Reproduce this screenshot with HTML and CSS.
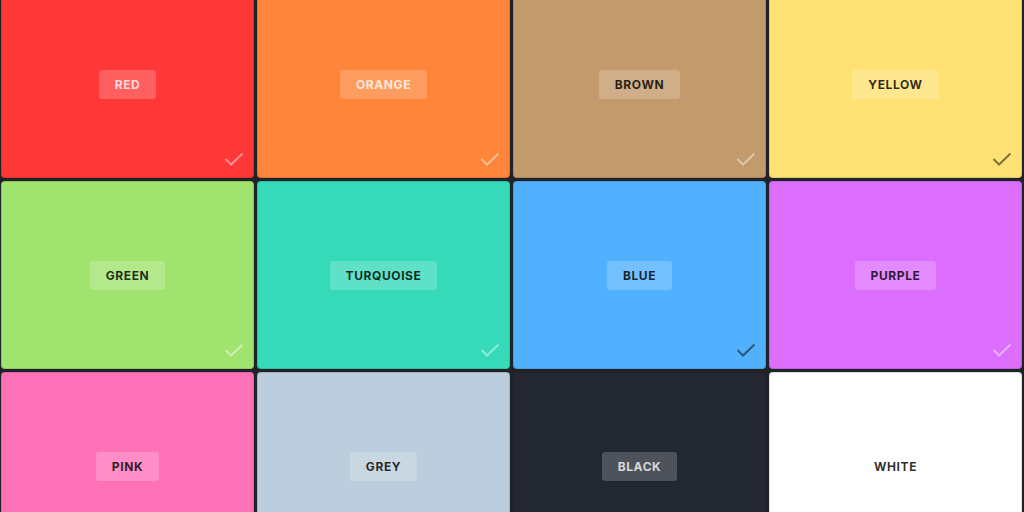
FILE: index.html
```html
<!DOCTYPE html>
<html lang="en">
<head>
  <meta charset="utf-8">
  <title>Colours</title>
  <link rel="stylesheet" href="styles.css">
</head>
<body>
  <div class="grid">
    <div class="tile red light">
      <span class="label">RED</span>
      <svg class="check" viewBox="0 0 20 14"><polyline points="1.5 7 7 12.5 18.5 1.5"/></svg>
    </div>
    <div class="tile orange light">
      <span class="label">ORANGE</span>
      <svg class="check" viewBox="0 0 20 14"><polyline points="1.5 7 7 12.5 18.5 1.5"/></svg>
    </div>
    <div class="tile brown light-check">
      <span class="label">BROWN</span>
      <svg class="check" viewBox="0 0 20 14"><polyline points="1.5 7 7 12.5 18.5 1.5"/></svg>
    </div>
    <div class="tile yellow">
      <span class="label">YELLOW</span>
      <svg class="check" viewBox="0 0 20 14"><polyline points="1.5 7 7 12.5 18.5 1.5"/></svg>
    </div>

    <div class="tile green light-check">
      <span class="label">GREEN</span>
      <svg class="check" viewBox="0 0 20 14"><polyline points="1.5 7 7 12.5 18.5 1.5"/></svg>
    </div>
    <div class="tile turquoise light-check">
      <span class="label">TURQUOISE</span>
      <svg class="check" viewBox="0 0 20 14"><polyline points="1.5 7 7 12.5 18.5 1.5"/></svg>
    </div>
    <div class="tile blue">
      <span class="label">BLUE</span>
      <svg class="check" viewBox="0 0 20 14"><polyline points="1.5 7 7 12.5 18.5 1.5"/></svg>
    </div>
    <div class="tile purple light-check">
      <span class="label">PURPLE</span>
      <svg class="check" viewBox="0 0 20 14"><polyline points="1.5 7 7 12.5 18.5 1.5"/></svg>
    </div>

    <div class="tile pink">
      <span class="label">PINK</span>
    </div>
    <div class="tile grey">
      <span class="label">GREY</span>
    </div>
    <div class="tile black light">
      <span class="label">BLACK</span>
    </div>
    <div class="tile white">
      <span class="label">WHITE</span>
    </div>
  </div>
</body>
</html>
```

FILE: styles.css
```css
html {
  height: 100%;
}

body {
  margin: 0;
  height: 100%;
  overflow: hidden;
  background-color: #1f2226;
  font-family: 'Inter', 'Liberation Sans', sans-serif;
  -webkit-font-smoothing: antialiased;
}

.grid {
  display: grid;
  grid-template-columns: repeat(4, 1fr);
  grid-auto-rows: 188px;
  gap: 3px;
  margin-top: -10px;
  padding: 0 2px 0 1px;
}

.tile {
  position: relative;
  display: flex;
  align-items: center;
  justify-content: center;
  border-radius: 4px;
  box-shadow: inset 0 0 0 1px rgba(0,0,0,.12);
}

.label {
  padding: 0 16px;
  height: 29px;
  line-height: 29px;
  border-radius: 3px;
  background-color: rgba(255,255,255,.2);
  font-size: 12px;
  font-weight: 700;
  letter-spacing: .6px;
  color: rgba(0,0,0,.82);
}

.light .label {
  color: rgba(255,255,255,.78);
}

.check {
  position: absolute;
  right: 10px;
  bottom: 12px;
  width: 20px;
  height: 14px;
  fill: none;
  stroke: rgba(0,0,0,.5);
  stroke-width: 2;
}

.light .check,
.light-check .check {
  stroke: rgba(255,255,255,.45);
}

.red { background-color: #fe3737; }
.orange { background-color: #ff853a; }
.brown { background-color: #c39a6c; }
.yellow { background-color: #ffe273; }
.green { background-color: #a1e36f; }
.turquoise { background-color: #36dab9; }
.blue { background-color: #52b1fe; }
.purple { background-color: #dc6efe; }
.pink { background-color: #ff72b8; }
.grey { background-color: #bccddd; }
.black { background-color: #222731; }
.white { background-color: #ffffff; }
```
